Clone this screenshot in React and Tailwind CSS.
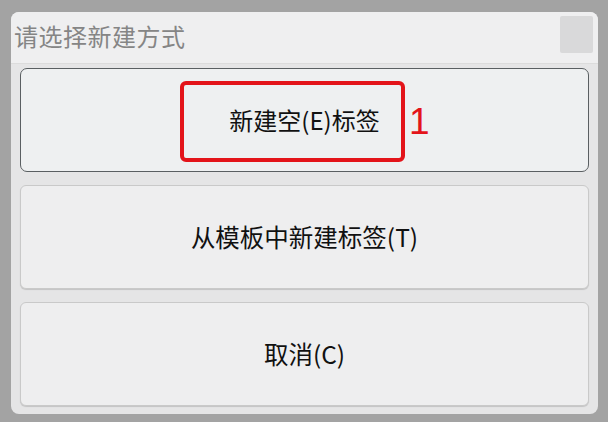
export default function App() {
  const cjk = { fontFamily: '"Noto Sans CJK SC", "Noto Sans", sans-serif' };
  return (
    <div className="w-[608px] h-[422px] bg-[#a3a3a3] pl-[11px] pr-[10px] pt-[12px] pb-[8px]" style={cjk}>
      <div className="h-full rounded-[8px] bg-[#e5e5e6] flex flex-col overflow-hidden">
        <div className="h-[52px] shrink-0 bg-[#efeff0] border-b border-[#dcdcdc] flex items-center justify-between pl-[3px] pr-[5px]">
          <span className="text-[24px] text-[#858585] leading-none tracking-[0.5px] -mt-[3px]">请选择新建方式</span>
          <div className="w-[33px] h-[37px] bg-[#d9d9da] rounded-[2px] -mt-[7px]" />
        </div>
        <div className="flex-1 flex flex-col gap-[13px] px-[9px] pt-[4px]">
          <div className="relative h-[104px] rounded-[7px] border border-[#5a5f62] bg-[#eef0f1] flex items-center justify-center">
            <div className="absolute left-[159px] top-[12px] w-[225px] h-[81px] rounded-[6px] border-[4px] border-[#e3141a]" />
            <span className="text-[24px] text-[#111] leading-none">新建空(E)标签</span>
            <span
              className="absolute left-[388px] top-[34px] text-[37px] leading-none text-[#e3141a]"
              style={{ fontFamily: '"Liberation Sans", Arial, sans-serif' }}
            >
              1
            </span>
          </div>
          <div className="h-[104px] rounded-[6px] border border-[#c9c9c9] bg-[#eeeeef] shadow-[0_1px_1px_rgba(0,0,0,0.15)] flex items-center justify-center">
            <span className="text-[24.5px] text-[#111] leading-none">从模板中新建标签(T)</span>
          </div>
          <div className="h-[104px] rounded-[6px] border border-[#c9c9c9] bg-[#eeeeef] shadow-[0_1px_1px_rgba(0,0,0,0.15)] flex items-center justify-center">
            <span className="text-[24.5px] text-[#111] leading-none">取消(C)</span>
          </div>
        </div>
      </div>
    </div>
  );
}
